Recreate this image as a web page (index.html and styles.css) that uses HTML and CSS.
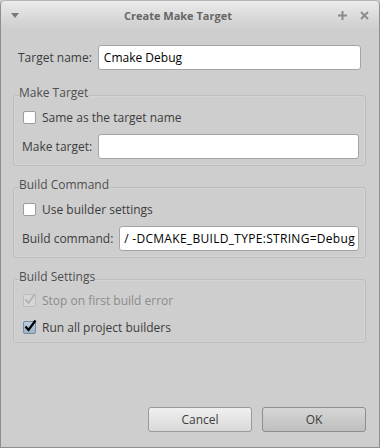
FILE: index.html
```html
<!DOCTYPE html>
<html lang="en">
<head>
    <meta charset="UTF-8">
    <meta name="viewport" content="width=device-width, initial-scale=1.0">
    <title>Create Make Target</title>
    <link rel="stylesheet" href="styles.css">
</head>
<body>
    <div class="window">
        <div class="titlebar">
            <svg class="menu-arrow" width="8" height="5" viewBox="0 0 8 5"><path d="M0 0h8L4 5z" fill="#7a7a7a"/></svg>
            <span class="title">Create Make Target</span>
            <div class="controls">
                <svg width="9" height="9" viewBox="0 0 9 9"><path d="M4.5 0v9M0 4.5h9" stroke="#8a8a8a" stroke-width="2"/></svg>
                <svg width="9" height="9" viewBox="0 0 9 9"><path d="M1 1l7 7M8 1l-7 7" stroke="#8a8a8a" stroke-width="1.8"/></svg>
            </div>
        </div>

        <div class="content">
            <div class="row name-row">
                <label for="targetName">Target name:</label>
                <input type="text" id="targetName" class="field" value="Cmake Debug">
            </div>

            <fieldset class="group">
                <legend>Make Target</legend>
                <div class="check">
                    <span class="box"></span>
                    <span>Same as the target name</span>
                </div>
                <div class="row">
                    <label for="makeTarget">Make target:</label>
                    <input type="text" id="makeTarget" class="field">
                </div>
            </fieldset>

            <fieldset class="group">
                <legend>Build Command</legend>
                <div class="check">
                    <span class="box"></span>
                    <span>Use builder settings</span>
                </div>
                <div class="row">
                    <label>Build command:</label>
                    <div class="field scrolled"><span>/ -DCMAKE_BUILD_TYPE:STRING=Debug</span></div>
                </div>
            </fieldset>

            <fieldset class="group settings">
                <legend>Build Settings</legend>
                <div class="check disabled">
                    <span class="box checked">
                        <svg width="14" height="14" viewBox="0 0 14 14"><path d="M2.5 7.5l3 3.5L12 2" fill="none" stroke="#b4b4b4" stroke-width="2"/></svg>
                    </span>
                    <span>Stop on first build error</span>
                </div>
                <div class="check">
                    <span class="box checked on">
                        <svg width="14" height="14" viewBox="0 0 14 14"><path d="M2.5 7.5l3 3.5L12.5 1.5" fill="none" stroke="#000" stroke-width="2.2"/></svg>
                    </span>
                    <span>Run all project builders</span>
                </div>
            </fieldset>
        </div>

        <div class="buttons">
            <button type="button" class="btn">Cancel</button>
            <button type="button" class="btn default">OK</button>
        </div>
    </div>
</body>
</html>
```

FILE: styles.css
```css
html, body {
    margin: 0;
    padding: 0;
    background: #cecece;
}
body {
    font-family: "Open Sans", "DejaVu Sans", sans-serif;
    font-size: 12px;
    color: #3c3c3c;
}
.window {
    box-sizing: border-box;
    width: 380px;
    height: 448px;
    display: flex;
    flex-direction: column;
    background: #cecece;
    border: 1px solid #8e8e8e;
    border-top-color: #b4b4b4;
    border-radius: 5px 5px 0 0;
    overflow: hidden;
}
.titlebar {
    height: 28px;
    flex: none;
    display: flex;
    align-items: center;
    padding: 0 10px 0 10px;
    background: linear-gradient(#ebebeb, #d6d6d6 70%, #cecece);
}
.menu-arrow {
    flex: none;
    margin-right: 18px;
}
.title {
    flex: 1;
    text-align: center;
    font-size: 11px;
    font-weight: bold;
    color: #666;
    padding-right: 18px;
}
.controls {
    display: flex;
    gap: 13px;
    width: 32px;
    justify-content: flex-end;
}
.content {
    padding: 16px 13px 0 12px;
}
.row {
    display: flex;
    align-items: center;
    gap: 6px;
}
.row label {
    flex: none;
}
.name-row {
    padding: 0 5px 0 5px;
}
.field {
    box-sizing: border-box;
    flex: 1;
    min-width: 0;
    height: 25px;
    margin: 0;
    padding: 0 5px;
    border: 1px solid #a4a4a4;
    border-radius: 3px;
    background: #fff;
    font-family: inherit;
    font-size: 12px;
    color: #000;
    outline: none;
}
.scrolled {
    display: flex;
    align-items: center;
    justify-content: flex-end;
    overflow: hidden;
    white-space: nowrap;
    padding: 0 3px;
    letter-spacing: 0.3px;
}
.group {
    margin: 11px 0 0 0;
    padding: 0 6px 6px 8px;
    border: 1px solid #bdbdbd;
    border-radius: 3px;
    box-shadow: inset 0 0 0 1px #d4d4d4;
}
.name-row + .group {
    margin-top: 15px;
}
.group legend {
    padding: 0 0 4px 0;
    margin-left: -3px;
    line-height: 16px;
    color: #4e4e4e;
}
.group .row {
    margin-top: 5px;
}
.check {
    display: flex;
    align-items: center;
    gap: 6px;
    height: 24px;
    padding-left: 1px;
}
.box {
    box-sizing: border-box;
    width: 13px;
    height: 13px;
    flex: none;
    position: relative;
    border: 1px solid #9c9c9c;
    border-radius: 2px;
    background: #fff;
}
.box svg {
    position: absolute;
    left: -1px;
    top: -3px;
}
.box.checked {
    background: #d6d6d6;
    border-color: #bcbcbc;
}
.box.on {
    background: linear-gradient(#bccbdc, #9fb3c9);
    border-color: #7689a0;
}
.disabled {
    color: #8c8c8c;
}
.settings {
    padding-bottom: 3px;
}
.settings .check:first-of-type {
    margin-top: -1px;
}
.settings .check + .check {
    margin-top: 3px;
}
.buttons {
    margin-top: auto;
    display: flex;
    justify-content: flex-end;
    gap: 10px;
    padding: 0 13px 15px 0;
}
.btn {
    width: 104px;
    height: 25px;
    border: 1px solid #9a9a9a;
    border-radius: 3px;
    background: linear-gradient(#f0f0f0, #d9d9d9);
    font-family: inherit;
    font-size: 12px;
    color: #3c3c3c;
}
.btn.default {
    background: linear-gradient(#d6d6d6, #bfbfbf);
    border-color: #8e8e8e;
}
```
